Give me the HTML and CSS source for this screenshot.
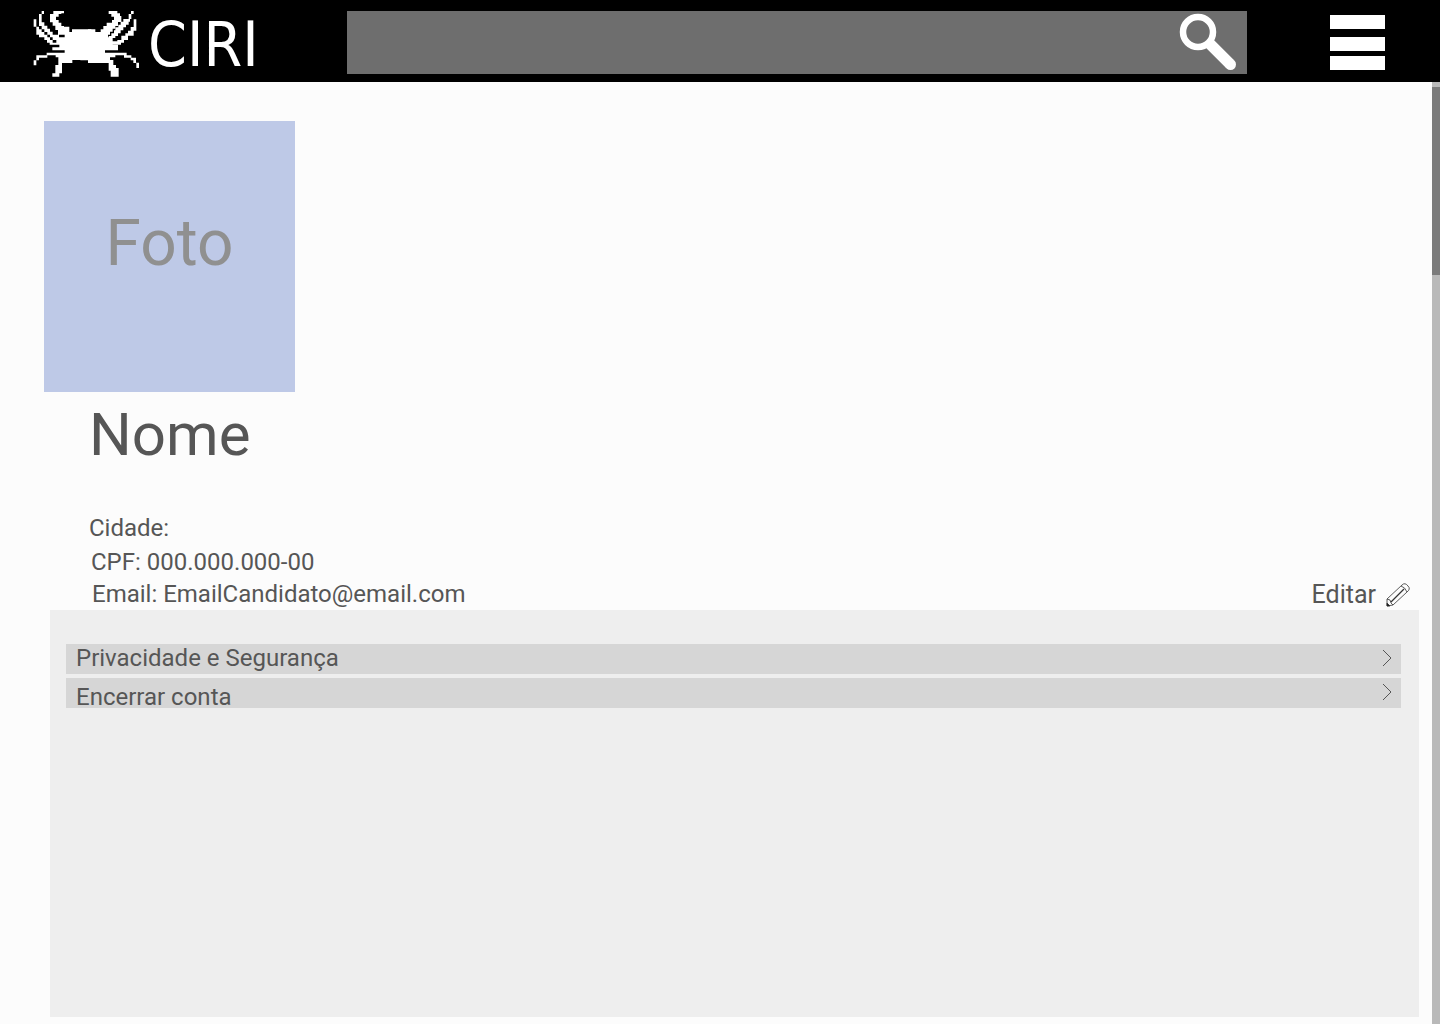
FILE: index.html
```html
<!DOCTYPE html>
<html lang="pt-BR">
<head>
<meta charset="utf-8">
<meta name="viewport" content="width=device-width, initial-scale=1">
<title>CIRI - Perfil</title>
<link rel="stylesheet" href="styles.css">
</head>
<body>
<header class="topbar">
  <a class="brand" href="#">
    <svg class="crab" viewBox="0 0 360 234" aria-hidden="true" fill="#fff">
      <!-- left claws, body and left legs -->
      <path d="M76 21H108V28H100V30H92V38H84V48H92V56H100V66H108V68H124V84H132V76H190V169H157V168H133V177H102V208H94V218H73V208H82V183H91V160H83V154H58V161H33V169H25V184H17V169H25V154H56V146H110V139H73V130H94V122H65V116H57V108H49V100H33V92H25V68H17V46H25V68H33V76H41V84H49V92H58V100H66V108H74V116H85V108H74V100H66V92H58V84H49V76H41V66H33V30H41V21H48V30H41V55H49V65H58V74H66V83H74V92H93V100H110V92H90V78H82V65H74V55H66V30H76Z"/>
      <!-- right side of the body and inner claw -->
      <path d="M180 76H202V84H218V76H226V66H236V56H252V48H258V38H250V30H242V21H268V28H276V36H280V54H270V66H262V74H254V83H246V92H240V100H254V122H270V139H231V146H296V154H310V161H324V176H333V192H325V177H316V169H308V161H288V154H262V160H246V168H256V183H264V192H272V218H248V200H242V177H180Z"/>
      <!-- right middle claw -->
      <path d="M309 21h8v9h-8zM302 30h8v7h-8zM302 37h8v8h-8zM286 45h20v8h-20zM278 53h24v9h-24zM271 62h23v8h-23zM262 70h24v9h-24zM258 79h20v9h-20zM250 88h20v8h-20zM242 96h20v6h-20z"/>
      <!-- right outer claw -->
      <path d="M317 46h8v23h-8zM308 69h17v11h-17zM300 80h17v12h-17zM292 88h25v7h-25zM280 95h20v13h-20zM268 108h20v8h-20zM252 112h27v10h-27z"/>
    </svg>
    <span class="wordmark">CIRI</span>
  </a>
  <form class="search" role="search">
    <input class="search-input" type="search" aria-label="Pesquisar">
    <button class="search-button" type="submit" aria-label="Buscar">
      <svg viewBox="0 0 56 56" fill="none" stroke="#fff"><circle cx="18" cy="18" r="15" stroke-width="6.500"/><path d="M29 29 50 50" stroke-width="11"/><circle cx="50.500" cy="50.500" r="5.500" fill="#fff" stroke="none"/></svg>
    </button>
  </form>
  <button class="menu" type="button" aria-label="Menu">
    <svg viewBox="0 0 55 55" fill="#fff"><path d="M0 0h55v14H0zM0 22h55v14H0zM0 41h55v14H0z"/></svg>
  </button>
</header>
<div class="page">
  <main class="content">
    <section class="profile">
      <div class="photo">Foto</div>
      <h1 class="name">Nome</h1>
      <div class="details">
        <ul class="facts">
          <li>Cidade:</li>
          <li class="cpf">CPF: 000.000.000-00</li>
          <li class="email">Email: EmailCandidato@email.com</li>
        </ul>
        <button class="edit" type="button">Editar
          <svg viewBox="0 0 24 24" fill="none" stroke="#333" stroke-width=".8"><path d="M1 16 16 2Q19-1 22 3Q25 6 21 9L7 22 1 23ZM1 16 4 17 5 20 7 22M15 3Q19 4 21 9"/><path d="M5 19 18 6" stroke-width="1.200"/><path d="M1 20v3h3z" fill="#111"/></svg>
        </button>
      </div>
    </section>
    <nav class="settings" aria-label="Conta">
      <a class="option" href="#"><span>Privacidade e Segurança</span> <svg viewBox="0 0 10 16"><path d="M1 0 9 8 1 16"/></svg></a>
      <a class="option option-close" href="#"><span>Encerrar conta</span> <svg viewBox="0 0 10 16"><path d="M1 0 9 8 1 16"/></svg></a>
    </nav>
  </main>
  <div class="scroll-track"><div class="scroll-thumb"></div></div>
</div>
</body>
</html>
```
FILE: styles.css
```css
* { box-sizing: border-box; }

body {
  margin: 0;
  min-height: 100vh;
  display: flex;
  flex-direction: column;
  background: #fcfcfc;
  color: #565656;
  font: 24px/32px Roboto, sans-serif;
}

button {
  padding: 0;
  border: 0;
  background: none;
  color: inherit;
  font: inherit;
  cursor: pointer;
}

a { color: inherit; text-decoration: none; }
svg { display: block; flex: none; overflow: visible; }

.topbar {
  display: flex;
  align-items: flex-start;
  height: 82px;
  padding: 0 55px 0 28px;
  background: #000;
}

.brand {
  display: flex;
  flex: none;
  width: 319px;
  padding-top: 4px;
  color: #fff;
}

.crab { width: 120px; height: 78px; }

.wordmark {
  font: 62px/82px "DejaVu Sans Condensed", "DejaVu Sans", sans-serif;
}

.search {
  display: flex;
  flex: 1;
  height: 63px;
  margin-top: 11px;
  padding-right: 11px;
  background: #6e6e6e;
}

.search-input {
  flex: 1;
  min-width: 0;
  padding: 0 16px;
  border: 0;
  background: none;
  color: #fff;
  font: inherit;
}

.search-button { width: 56px; height: 56px; margin-top: 3px; }

.menu {
  flex: none;
  width: 55px;
  height: 55px;
  margin: 15px 0 0 83px;
}

.page { display: flex; flex: 1; }

.content {
  display: flex;
  flex: 1;
  flex-direction: column;
  padding: 39px 13px 7px 44px;
}

.photo {
  display: grid;
  place-items: center;
  width: 251px;
  height: 271px;
  padding-bottom: 26px;
  background: #bec9e7;
  color: #909090;
  font-size: 64px;
  line-height: 72px;
}

.name {
  margin: 7px 0 41px 45px;
  font-size: 60px;
  font-weight: 400;
  line-height: 72px;
}

.details {
  display: flex;
  align-items: flex-end;
  justify-content: space-between;
  padding: 0 9px 0 45px;
}

.facts { margin: 0; padding: 0; list-style: none; }
.cpf { padding: 2px 0 0 2px; }
.email { padding-left: 3px; }

.edit {
  display: flex;
  align-items: center;
  gap: 10px;
  font-size: 25px;
  line-height: 30px;
}

.edit svg { width: 24px; height: 24px; }

.settings {
  display: flex;
  flex: 1;
  flex-direction: column;
  gap: 4px;
  margin-left: 6px;
  padding: 34px 18px 34px 16px;
  background: #eee;
}

.option {
  display: flex;
  align-items: center;
  justify-content: space-between;
  height: 30px;
  padding: 0 9px 2px 10px;
  background: #d6d6d6;
}

.option-close span { padding-top: 10px; }

.option svg { width: 10px; height: 16px; fill: none; stroke: #555; }

.scroll-track { width: 8px; padding-top: 5px; background: #b9b9b9; }
.scroll-thumb { height: 188px; background: #7b7b7b; }
```
